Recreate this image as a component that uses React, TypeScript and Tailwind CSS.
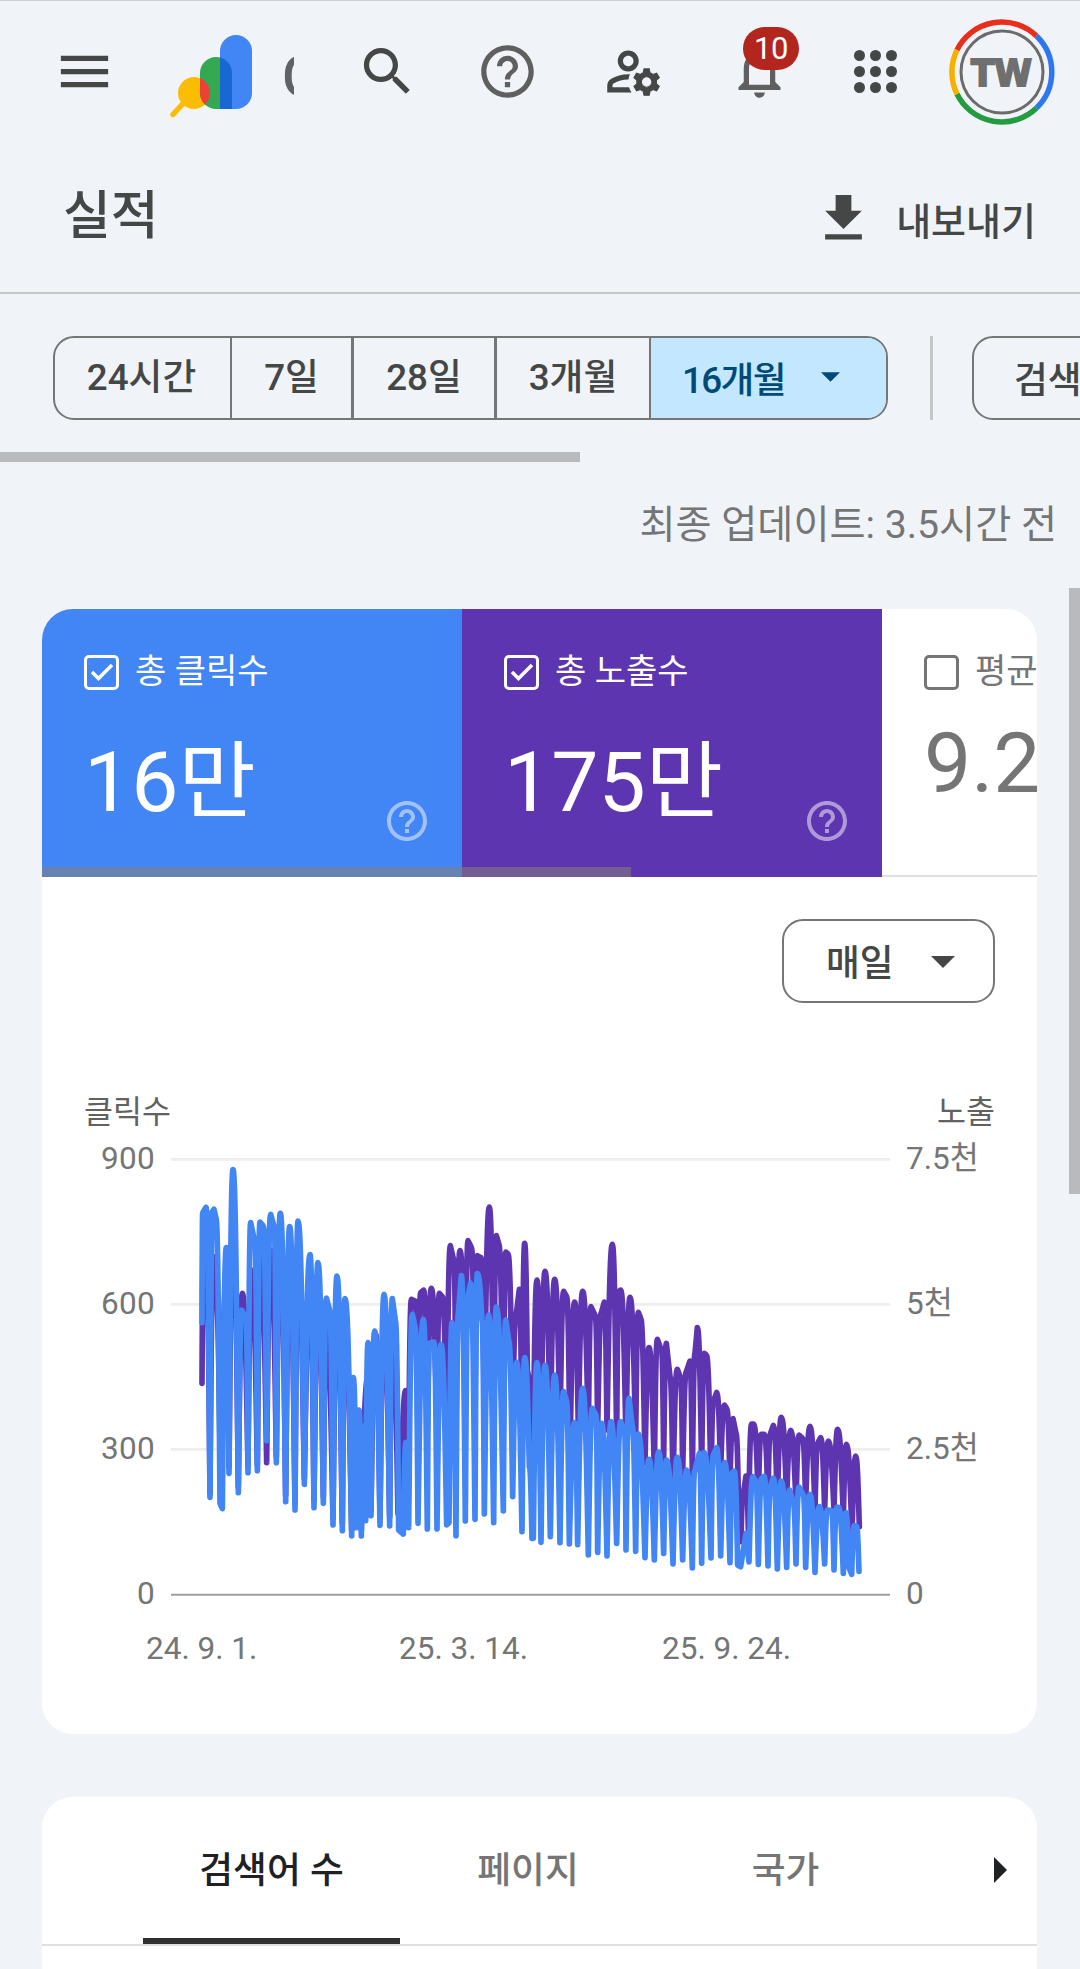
import type { ReactNode } from "react";
import { clsx } from "clsx";

type Point = [number, number];

// "x,y" vertices in chart units (3 units = 1px)
const clicks =
    "36,518 38,188 48,172 60,1042 67,185 72,178 78,205 90,1060 97,1076 109,293 117,970 129,59 145,1028 155,480 168,507 174,968 182,218 195,280 202,962 210,216 220,228 230,872 242,193 253,233 259,938 271,190 287,1055 299,230 315,1080 324,213 343,1003 360,314 372,1073 384,338 400,1060 409,444 419,480 429,1125 441,378 457,1142 465,446 485,1158 490,683 499,1133 507,780 514,1158 520,828 527,1112 534,578 543,1097 554,543 570,1126 582,433 599,1128 607,446 616,510 626,1140 640,1152 648,877 656,1133 667,493 676,535 684,1120 700,508 712,1137 718,580 732,576 741,1137 753,583 770,1125 777,1118 786,518 798,1157 805,490 814,377 826,1113 834,440 842,399 855,1108 862,371 876,510 883,1092 896,495 911,1118 919,471 940,1083 947,510 956,570 968,1040 980,637 996,1145 1004,623 1018,950 1026,1165 1030,1165 1041,638 1053,1177 1065,646 1081,1160 1094,675 1110,1178 1121,725 1129,750 1138,1182 1154,818 1163,1184 1178,715 1195,1215 1207,775 1218,795 1223,1207 1235,820 1251,1218 1263,815 1280,1180 1292,815 1304,845 1308,1200 1317,745 1327,830 1337,1204 1345,852 1365,1223 1377,928 1393,1230 1406,906 1421,1210 1430,930 1449,1242 1462,922 1478,1230 1490,960 1507,1254 1514,965 1528,910 1535,1240 1543,908 1563,1224 1570,915 1580,893 1592,1218 1604,938 1620,1238 1627,968 1633,963 1643,1245 1652,1250 1668,1150 1677,1236 1689,980 1698,995 1705,1243 1715,985 1722,979 1734,1248 1741,1010 1750,984 1762,1257 1774,993 1790,1252 1799,1020 1810,1058 1818,1242 1827,1011 1840,1035 1847,1252 1860,1033 1875,1267 1888,1070 1904,1242 1912,1080 1925,1082 1932,1260 1940,1072 1946,1072 1960,1270 1968,1088 1976,1250 1985,1273 1993,1127 1999,1128 2007,1264";

const impressions =
    "36,700 40,300 50,400 60,1030 70,320 77,420 92,1030 109,400 117,950 129,240 145,1010 157,430 174,950 184,360 202,945 212,320 230,938 242,300 259,920 271,300 287,1035 299,330 315,1060 324,330 343,985 360,420 372,1050 384,440 400,1040 409,530 429,1105 441,480 457,1120 465,540 485,1140 490,800 499,1115 507,850 514,1140 534,680 543,1080 557,552 570,1100 582,530 599,1100 607,540 624,1090 632,1035 647,722 655,1050 664,448 677,454 684,890 692,428 701,420 712,840 724,415 741,840 748,430 757,440 770,880 781,287 792,335 798,840 810,302 826,790 834,272 844,292 855,790 862,317 873,323 883,790 898,171 911,790 919,257 926,280 940,840 947,306 954,312 968,840 977,508 988,418 996,900 1004,280 1012,660 1020,700 1029,950 1041,390 1053,870 1065,364 1081,860 1094,388 1110,840 1121,424 1130,440 1140,915 1154,456 1165,840 1178,424 1195,840 1203,470 1216,498 1223,840 1234,488 1243,456 1251,840 1267,283 1280,870 1286,425 1292,420 1308,870 1320,442 1337,870 1345,487 1352,505 1365,940 1377,593 1393,970 1402,568 1415,604 1421,930 1429,580 1440,680 1449,1005 1462,658 1472,685 1478,970 1489,665 1500,633 1507,980 1515,610 1522,533 1535,950 1543,610 1549,615 1563,1000 1570,755 1580,727 1592,960 1603,765 1610,775 1620,990 1629,806 1638,850 1646,1080 1653,1175 1658,1045 1668,978 1675,1138 1685,822 1691,822 1705,1050 1713,853 1723,853 1734,1050 1740,855 1750,826 1762,1060 1774,802 1790,1050 1802,841 1818,1060 1827,855 1838,865 1847,1060 1860,829 1875,1080 1883,880 1892,863 1904,1080 1915,873 1932,1080 1943,838 1960,1100 1969,883 1986,1150 1997,918 2008,1130";

const toPath = (series: string) => {
    const points = series.split(" ").map((p) => p.split(",").map(Number) as Point);

    return points
        .map(([x, y], i) => {
            if (i === 0) return `M${x} ${y}`;
            const [px, py] = points[i - 1];
            const dx = x - px;
            const dy = y - py;
            if (Math.abs(dy) < 130) return `L${x} ${y}`;
            // flat around the weekday peak, steep towards the weekend low
            return dy < 0
                ? `C${px + dx * 0.3} ${py + dy * 0.5} ${px + dx * 0.5} ${y} ${x} ${y}`
                : `C${px + dx * 0.5} ${py} ${px + dx * 0.7} ${py + dy * 0.5} ${x} ${y}`;
        })
        .join("");
};

const Icon = ({ d, className }: { d: string; className?: string }) => (
    <svg viewBox="0 0 24 24" fill="currentColor" className={clsx("shrink-0", className)}>
        <path d={d} />
    </svg>
);

const icons = {
    menu: "M3 18h18v-2H3v2zm0-5h18v-2H3v2zm0-7v2h18V6H3z",
    search: "M15.5 14h-.79l-.28-.27C15.41 12.59 16 11.11 16 9.5 16 5.91 13.09 3 9.5 3S3 5.91 3 9.5 5.91 16 9.5 16c1.61 0 3.09-.59 4.23-1.57l.27.28v.79l5 4.99L20.49 19l-4.99-5zm-6 0C7.01 14 5 11.99 5 9.5S7.01 5 9.5 5 14 7.01 14 9.5 11.99 14 9.5 14z",
    help: "M11 18h2v-2h-2v2zm1-16C6.48 2 2 6.48 2 12s4.48 10 10 10 10-4.48 10-10S17.52 2 12 2zm0 18c-4.41 0-8-3.59-8-8s3.59-8 8-8 8 3.59 8 8-3.59 8-8 8zm0-14c-2.21 0-4 1.79-4 4h2c0-1.1.9-2 2-2s2 .9 2 2c0 2-3 1.75-3 5h2c0-2.25 3-2.5 3-5 0-2.21-1.79-4-4-4z",
    person: "M4 18v-.65c0-.34.16-.66.41-.81C6.1 15.53 8.03 15 10 15c.03 0 .05 0 .08.01.1-.7.3-1.37.59-1.98-.22-.02-.44-.03-.67-.03-2.42 0-4.68.67-6.61 1.82-.88.52-1.39 1.5-1.39 2.53V20h9.26c-.42-.6-.75-1.28-.97-2H4zM10 12c2.21 0 4-1.79 4-4s-1.79-4-4-4-4 1.79-4 4 1.79 4 4 4zm0-6c1.1 0 2 .9 2 2s-.9 2-2 2-2-.9-2-2 .9-2 2-2z",
    gear: "M20.75 16c0-.22-.03-.42-.06-.63l1.14-1.01-1-1.73-1.45.49c-.32-.27-.68-.48-1.08-.63L18 11h-2l-.3 1.49c-.4.15-.76.36-1.08.63l-1.45-.49-1 1.73 1.14 1.01c-.03.21-.06.41-.06.63s.03.42.06.63l-1.14 1.01 1 1.73 1.45-.49c.32.27.68.48 1.08.63L16 21h2l.3-1.49c.4-.15.76-.36 1.08-.63l1.45.49 1-1.73-1.14-1.01c.03-.21.06-.41.06-.63zM17 18c-1.1 0-2-.9-2-2s.9-2 2-2 2 .9 2 2-.9 2-2 2z",
    bell: "M12 22c1.1 0 2-.9 2-2h-4c0 1.1.9 2 2 2zm6-6v-5c0-3.07-1.63-5.64-4.5-6.32V4c0-.83-.67-1.5-1.5-1.5s-1.5.67-1.5 1.5v.68C7.64 5.36 6 7.92 6 11v5l-2 2v1h16v-1l-2-2zm-2 1H8v-6c0-2.48 1.51-4.5 4-4.5s4 2.02 4 4.5v6z",
    download: "M19 9h-4V3H9v6H5l7 7 7-7zM5 18v2h14v-2H5z",
};

const Logo = () => (
    <svg viewBox="0 0 84 84" className="h-[84px] w-[84px] shrink-0">
        <defs>
            <clipPath id="green-bar">
                <rect x="30" y="22" width="32" height="52" rx="16" />
            </clipPath>
        </defs>
        <path d="M3 79.500L14 67.500" stroke="#fbbc04" strokeWidth="5.500" strokeLinecap="round" />
        <circle cx="24" cy="58" r="16" fill="#fbbc04" />
        <path d="M46 22a16 16 0 0 1 16 16v36H46a16 16 0 0 1-16-16V38a16 16 0 0 1 16-16z" fill="#34a853" />
        <circle cx="24" cy="58" r="16" fill="#ea4335" clipPath="url(#green-bar)" />
        <path d="M50 74V16a16 16 0 0 1 32 0v42a16 16 0 0 1-16 16z" fill="#4285f4" />
        <path d="M50 22.500a16 16 0 0 1 12 15.500v36H50z" fill="#1967d2" />
    </svg>
);

const Avatar = () => (
    <svg viewBox="0 0 106 106" className="h-[106px] w-[106px] shrink-0" fill="none">
        <g strokeWidth="5.500">
            <path d="M8 31A50 50 0 0 1 87.500 17" stroke="#ea2e1c" />
            <path d="M87.500 17A50 50 0 0 1 87.500 89" stroke="#2f76f5" />
            <path d="M87.500 89A50 50 0 0 1 8 75" stroke="#239b40" />
            <path d="M8 75A50 50 0 0 1 8 31" stroke="#f7b000" />
        </g>
        <circle cx="53" cy="53" r="41" stroke="#6b6b6b" strokeWidth="3" />
        <text x="22" y="67" textLength="61" lengthAdjust="spacingAndGlyphs" className="font-['DejaVu_Sans'] text-[37px] font-bold" fill="#6f6f6f" stroke="#6f6f6f" strokeWidth="2">
            TW
        </text>
    </svg>
);

const AppsIcon = () => (
    <div className="grid grid-cols-3 gap-[5px]">
        {Array.from({ length: 9 }, (_, i) => (
            <span key={i} className="size-[11px] rounded-full bg-[#444746]" />
        ))}
    </div>
);

const Header = () => (
    <header className="flex h-[142px] items-center border-t border-[#cdd0d4] text-[#444746]">
        <Icon d={icons.menu} className="ml-[53px] size-[63px]" />
        <div className="ml-[54px] mt-[11px]">
            <Logo />
        </div>
        <div className="ml-[30px] mt-[11px] w-[10px] overflow-hidden font-[Roboto] text-[55px] leading-none font-medium text-[#5f6368]">
            <span className="-ml-[2px]">G</span>
        </div>
        <Icon d={icons.search} className="ml-[62px] size-[63px]" />
        <Icon d={icons.help} className="ml-[57px] size-[63px] text-[#5f5f5f]" />
        <div className="relative ml-[63px] size-[63px]">
            <Icon d={icons.person} className="size-[63px]" />
            <Icon d={icons.gear} className="absolute top-0 left-0 size-[63px] stroke-current stroke-[0.4]" />
        </div>
        <div className="relative ml-[63px] size-[63px] text-[#5f5f5f]">
            <Icon d={icons.bell} className="size-[63px]" />
            <span className="absolute -top-[13px] left-[15px] flex h-[43px] w-14 items-center justify-center rounded-full bg-[#b3261e] pt-px font-[Roboto] text-[31px] tracking-[-0.5px] text-white">
                10
            </span>
        </div>
        <div className="ml-[63px]">
            <AppsIcon />
        </div>
        <div className="ml-[52px]">
            <Avatar />
        </div>
    </header>
);

const Caret = ({ className }: { className?: string }) => (
    <svg viewBox="0 0 24 12" fill="currentColor" className={className}>
        <path d="M0 0h24L12 12z" />
    </svg>
);

const Segment = ({ className, children }: { className?: string; children: ReactNode }) => (
    <div className={clsx("flex h-full shrink-0 items-center justify-center border-r-2 border-[#747775] pb-[1px]", className)}>
        {children}
    </div>
);

const Filters = () => (
    <div className="flex h-[158px] items-start overflow-hidden pt-[42px] pl-[53px] text-[36.75px] font-medium text-[#444746]">
        <div className="flex h-[84px] w-[835px] shrink-0 overflow-hidden rounded-[21px] border-2 border-[#747775] whitespace-nowrap">
            <Segment className="w-[177px] pr-[2px]">24시간</Segment>
            <Segment className="w-[122px] border-r-3">7일</Segment>
            <Segment className="w-[143px] border-r-3">28일</Segment>
            <Segment className="w-[154px]">3개월</Segment>
            <div className="flex flex-1 items-center bg-[#c2e7ff] pl-[31px] tracking-[-1.600px] text-[#004a77]">
                <span className="pt-[6px]">16개월</span>
                <Caret className="mb-[2px] ml-[36px] h-[10px] w-[19px]" />
            </div>
        </div>
        <div className="ml-[42px] h-[84px] w-[3px] shrink-0 bg-[#c4c7c5]" />
        <div className="ml-[39px] flex h-[84px] w-[260px] shrink-0 items-center rounded-[21px] border-2 border-[#747775] pt-[6px] pl-10">
            검색 유형
        </div>
    </div>
);

const Metric = ({ label, value, checked, className }: { label: string; value: string; checked?: boolean; className: string }) => (
    <div className={clsx("relative h-[268px] w-[420px] shrink-0 pl-[42px]", className)}>
        <div className="flex h-[126px] items-center gap-[16px] text-[34px] whitespace-nowrap">
            <span className="flex size-[35px] shrink-0 items-center justify-center rounded-[5px] border-3 border-current">
                {checked && (
                    <svg viewBox="0 0 24 20" className="h-[20px] w-[24px]" fill="none" stroke="currentColor" strokeWidth="3.500">
                        <path d="M2 10l6.500 6.500L22 3" />
                    </svg>
                )}
            </span>
            <span className="-mt-[2px]">{label}</span>
        </div>
        <div className={clsx("text-[84px] leading-[100px] whitespace-nowrap", checked ? "-mt-[2px]" : "-mt-[21px]")}>{value}</div>
        {checked && <Icon d={icons.help} className="absolute right-[31px] bottom-[32px] size-[48px] opacity-50" />}
    </div>
);

const yTicks = [
    { left: "900", right: "7.5천" },
    { left: "600", right: "5천" },
    { left: "300", right: "2.5천" },
    { left: "0", right: "0" },
];

const Chart = () => (
    <div className="px-[42px] text-[31.5px] text-[#757575]">
        <div className="flex h-[38px] items-center justify-between text-[#616161]">
            <span>클릭수</span>
            <span>노출</span>
        </div>
        <div className="mt-[18px] flex h-[460px]">
            <div className="-mt-[13px] flex w-[71px] flex-col text-right tracking-[0.3px]">
                {yTicks.map((t) => (
                    <span key={t.left} className="h-[145px] shrink-0 leading-[44px]">{t.left}</span>
                ))}
            </div>
            <svg viewBox="-60 0 2160 1380" className="ml-[15px] h-[460px] w-[720px] shrink-0" fill="none">
                <path d="M-57 28H2100M-57 463H2100M-57 898H2100" stroke="#eeeeee" strokeWidth="8" />
                <path d="M-57 1334H2100" stroke="#9e9e9e" strokeWidth="6" />
                <g strokeWidth="17" strokeLinecap="round" strokeLinejoin="round">
                    <path d={toPath(impressions)} stroke="#5e35b1" />
                    <path d={toPath(clicks)} stroke="#4285f4" />
                </g>
            </svg>
            <div className="-mt-[13px] ml-[16px] flex flex-col whitespace-nowrap">
                {yTicks.map((t) => (
                    <span key={t.right} className="h-[145px] shrink-0 leading-[44px]">{t.right}</span>
                ))}
            </div>
        </div>
        <div className="mt-[17px] flex h-[44px] items-center pl-[62px] whitespace-nowrap">
            <span className="w-[253px]">24. 9. 1.</span>
            <span className="w-[263px]">25. 3. 14.</span>
            <span>25. 9. 24.</span>
        </div>
    </div>
);

const Performance = () => (
    <section className="relative ml-[42px] h-[1125px] w-[995px] overflow-hidden rounded-[31px] bg-white">
        <div className="flex h-[268px] overflow-hidden">
            <Metric label="총 클릭수" value="16만" checked className="bg-[#4285f4] text-white" />
            <Metric label="총 노출수" value="175만" checked className="bg-[#5e35b1] text-white" />
            <Metric label="평균 CTR" value="9.2%" className="border-b-2 border-[#e0e0e0] text-[#757575]" />
        </div>
        <div className="absolute top-[258px] left-0 h-[10px] w-[589px] bg-[#848078]/55" />
        <div className="mt-[42px] mr-[42px] ml-auto flex h-[84px] w-[213px] items-center rounded-[21px] border-2 border-[#747775] pl-[42px] text-[36.75px] font-medium text-[#444746]">
            <span className="pt-[5px]">매일</span>
            <Caret className="mt-[2px] ml-[37px] h-3 w-6" />
        </div>
        <div className="mt-[91px]">
            <Chart />
        </div>
    </section>
);

const Tabs = () => (
    <section className="mt-[63px] ml-[42px] h-[172px] w-[995px] overflow-hidden rounded-t-[31px] bg-white">
        <div className="flex h-[149px] border-b-2 border-[#e0e0e0] pl-[101px] text-[36.75px] font-medium text-[#757575]">
            <div className="flex w-[257px] items-center justify-center border-b-6 border-[#303030] pt-[6px] text-[#202124]">검색어 수</div>
            <div className="flex w-[256px] items-center justify-center">페이지</div>
            <div className="flex w-[259px] items-center justify-center">국가</div>
            <svg viewBox="0 0 13 26" className="mt-[60px] ml-[79px] h-[26px] w-[13px] text-[#202124]" fill="currentColor">
                <path d="M0 0l13 13L0 26z" />
            </svg>
        </div>
    </section>
);

export default function App() {
    return (
        <div className="relative h-[1969px] w-[1080px] overflow-hidden bg-[#f0f4f9] font-[Roboto,'Noto_Sans_CJK_KR',sans-serif]">
            <Header />
            <div className="flex h-[152px] items-center border-b-2 border-[#c4c7c5] text-[#444746]">
                <h1 className="ml-[63px] text-[52px] font-medium">실적</h1>
                <Icon d={icons.download} className="mt-[3px] ml-auto size-[63px]" />
                <span className="mt-[10px] mr-[44px] ml-[21px] text-[38px] font-medium">내보내기</span>
            </div>
            <Filters />
            <div className="h-[10px] w-[580px] bg-[#b9babe]" />
            <div className="flex h-[147px] justify-end pt-[35px] pr-[23px] text-[39.2px] leading-[56px] text-[#757575]">
                최종 업데이트: 3.5시간 전
            </div>
            <Performance />
            <Tabs />
            <div className="absolute top-[588px] right-0 h-[606px] w-[11px] bg-[#b9babe]" />
        </div>
    );
}
